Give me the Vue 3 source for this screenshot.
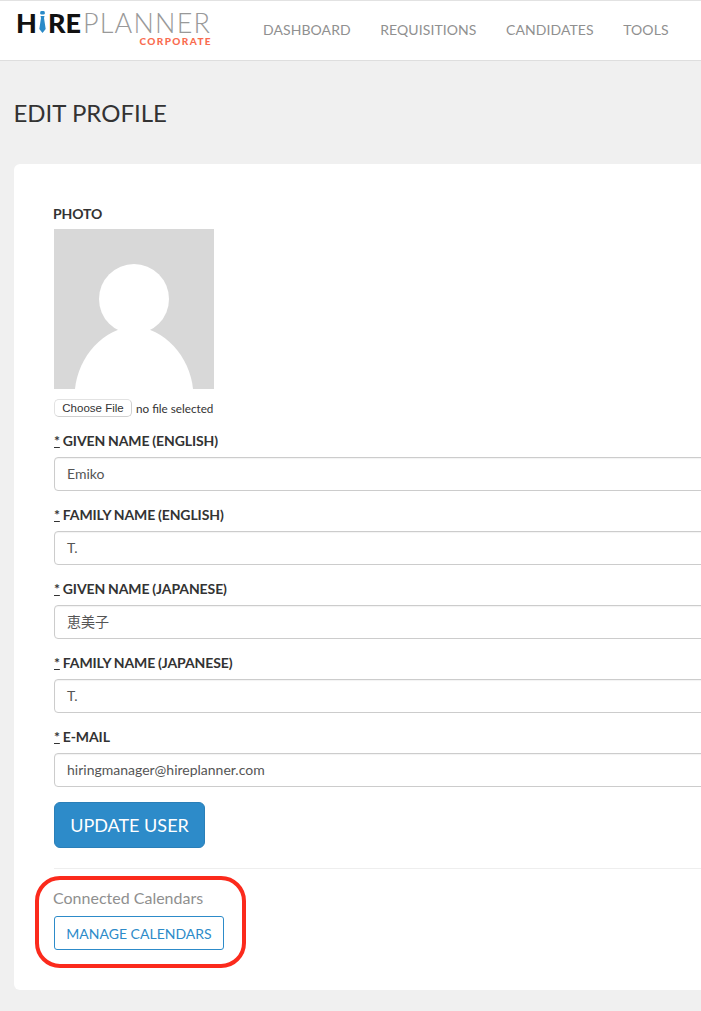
<script setup>
const fields = [
  { label: 'GIVEN NAME (ENGLISH)', value: 'Emiko' },
  { label: 'FAMILY NAME (ENGLISH)', value: 'T.' },
  { label: 'GIVEN NAME (JAPANESE)', value: '恵美子' },
  { label: 'FAMILY NAME (JAPANESE)', value: 'T.' },
  { label: 'E-MAIL', value: 'hiringmanager@hireplanner.com' },
]
const nav = ['DASHBOARD', 'REQUISITIONS', 'CANDIDATES', 'TOOLS']
</script>

<template>
  <div class="page">
    <header class="topbar">
      <div class="logo">
        <div class="logo-main">
          <span class="hire">H</span>
          <svg class="tie" width="7" height="22" viewBox="0 0 7 22">
            <rect x="1.2" y="0" width="4.6" height="3.6" rx="1.4" fill="#2a8ac8" />
            <path d="M1.5 5h4l-.5 2 1.7 11-3.2 4-3.2-4L2 7z" fill="#2a8ac8" />
          </svg>
          <span class="hire">RE</span>
          <span class="planner">PLANNER</span>
        </div>
        <div class="logo-sub">CORPORATE</div>
      </div>
      <nav class="nav">
        <a v-for="n in nav" :key="n">{{ n }}</a>
      </nav>
    </header>

    <main class="content">
      <h1>EDIT PROFILE</h1>
      <section class="card">
        <div class="label photo-label">PHOTO</div>
        <svg class="avatar" width="160" height="160" viewBox="0 0 160 160">
          <rect width="160" height="160" fill="#d8d8d8" />
          <circle cx="80" cy="70" r="35" fill="#fff" />
          <path d="M21 160C24 128 50 98 80 98s56 30 59 62z" fill="#fff" />
        </svg>
        <div class="file-row">
          <span class="file-btn">Choose File</span>
          <span class="file-text">no file selected</span>
        </div>

        <div v-for="f in fields" :key="f.label" class="field">
          <div class="label"><u>*</u> {{ f.label }}</div>
          <div class="input">{{ f.value }}</div>
        </div>

        <button class="primary">UPDATE USER</button>
        <hr />
        <div class="cal-title">Connected Calendars</div>
        <button class="outline">MANAGE CALENDARS</button>
        <div class="ring"></div>
      </section>
    </main>
  </div>
</template>

<style>
html, body { margin: 0; background: #f0f0f0; overflow: hidden; }
</style>

<style scoped>
.page {
  width: 701px;
  height: 1011px;
  overflow: hidden;
  background: #f0f0f0;
  font-family: Lato, "Noto Sans CJK JP", sans-serif;
  color: #333;
}
.topbar {
  box-sizing: border-box;
  height: 61px;
  background: #fff;
  border-top: 1px solid #e2e2e2;
  border-bottom: 1px solid #dedede;
  display: flex;
  align-items: center;
  padding-left: 16px;
}
.logo { width: 196px; margin-top: -3px; flex: none; }
.logo-main {
  display: flex;
  align-items: center;
  height: 21px;
  font-size: 27px;
  line-height: 21px;
}
.hire { font-weight: 900; color: #111; }
.tie { margin: 0 2px 0 2px; flex: none; }
.planner { font-weight: 300; color: #999; margin-left: 2px; letter-spacing: 1.2px; }
.logo-sub {
  text-align: right;
  font-size: 10px;
  line-height: 11px;
  font-weight: 900;
  letter-spacing: 1.4px;
  color: #f96c50;
  margin-top: 3px;
}
.nav {
  display: flex;
  gap: 29.5px;
  margin-left: 51px;
  margin-top: -2px;
  font-size: 14px;
  letter-spacing: .08px;
  color: #909090;
}
.content { padding: 0 0 0 14px; }
h1 {
  margin: 0 0 0 -.5px;
  padding-top: 36px;
  height: 67px;
  box-sizing: content-box;
  font-size: 24px;
  line-height: 32px;
  font-weight: 400;
  color: #333;
}
.card {
  position: relative;
  box-sizing: border-box;
  width: 760px;
  height: 826px;
  background: #fff;
  border-radius: 6px;
  padding: 41px 40px 0;
}
.label {
  font-size: 14px;
  line-height: 18px;
  font-weight: 700;
  color: #333;
  letter-spacing: -.1px;
}
.photo-label { margin-left: -1px; height: 24px; }
.avatar { display: block; }
.file-row {
  display: flex;
  align-items: center;
  height: 19px;
  margin-top: 9px;
}
.file-btn {
  box-sizing: border-box;
  width: 78px;
  height: 18px;
  line-height: 16px;
  text-align: center;
  background: #fff;
  border: 1px solid #e2e2e2;
  border-bottom-color: #d0d0d0;
  border-right-color: #d0d0d0;
  border-radius: 5px;
  color: #333;
  font-family: "Liberation Sans", sans-serif;
  font-size: 11.5px;
}
.file-text { margin-left: 4px; color: #333; font-size: 11.7px; }
.field { height: 74px; }
.file-row + .field { margin-top: 16px; }
.field .label { height: 24px; line-height: 15px; word-spacing: -.4px; }
.input {
  box-sizing: border-box;
  height: 34px;
  border: 1px solid #ccc;
  border-radius: 4px;
  padding: 0 12px;
  font-size: 14px;
  line-height: 32px;
  color: #555;
  box-shadow: inset 0 1px 1px rgba(0,0,0,.05);
}
.primary {
  display: block;
  box-sizing: border-box;
  width: 151px;
  height: 46px;
  margin-top: -1px;
  background: #2d8bc9;
  border: 1px solid #2a7fb8;
  border-radius: 6px;
  color: #fff;
  font-family: inherit;
  font-size: 18px;
  padding: 0;
}
hr {
  border: 0;
  border-top: 1px solid #eee;
  margin: 20px 0 0;
}
.cal-title {
  margin: 19px 0 0 -1px;
  font-size: 16px;
  line-height: 20px;
  color: #8f8f8f;
}
.outline {
  display: block;
  box-sizing: border-box;
  width: 170px;
  height: 34px;
  margin-top: 8px;
  background: #fff;
  border: 1px solid #2d8bc9;
  border-radius: 3px;
  color: #2d8bc9;
  font-family: inherit;
  font-size: 14px;
  padding: 0;
}
.ring {
  position: absolute;
  left: 21px;
  top: 712px;
  width: 211px;
  height: 92px;
  box-sizing: border-box;
  border: 4px solid #fb2a1c;
  border-radius: 25px;
}
</style>
